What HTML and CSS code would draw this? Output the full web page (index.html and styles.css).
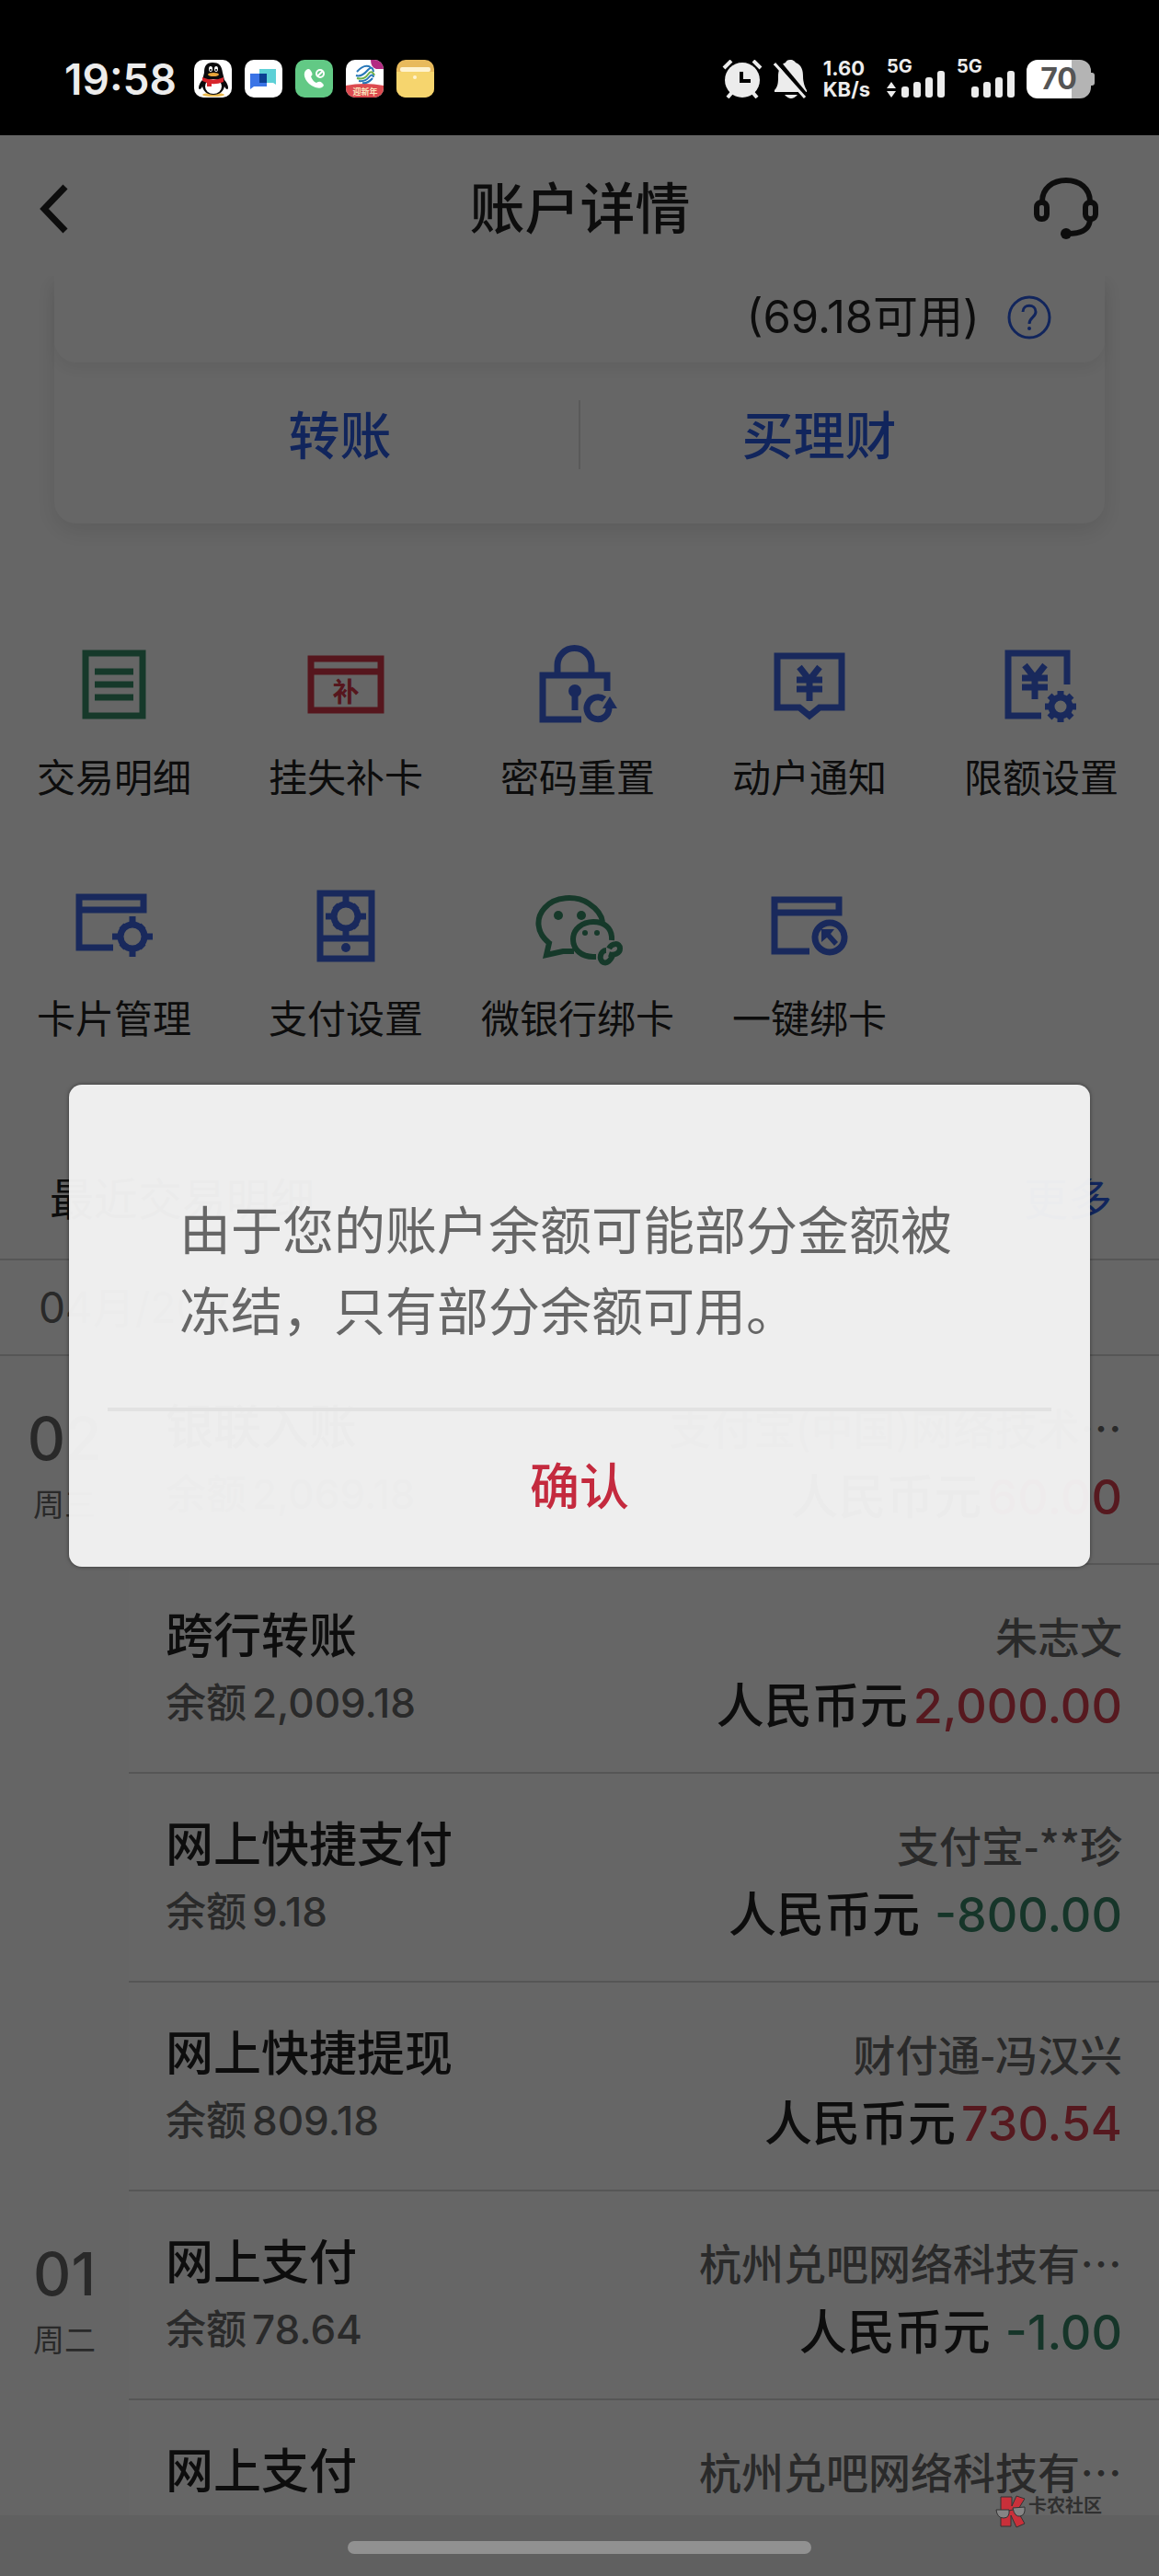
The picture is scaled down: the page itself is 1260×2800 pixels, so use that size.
FILE: index.html
```html
<!doctype html>
<html lang="zh-CN">
<head>
<meta charset="utf-8">
<meta name="viewport" content="width=device-width, initial-scale=1">
<title>账户详情</title>
<link rel="stylesheet" href="styles.css">
</head>
<body>

<div class="statusbar">
	<div class="status-left">
		<span class="time">19:58</span>
		<!-- qq -->
		<svg class="app" viewBox="0 0 41 41"><rect width="41" height="41" rx="10" fill="#fff"/><ellipse cx="21" cy="38" rx="12" ry="2" fill="#e9b84e"/><path d="M9 22C5 26 4 32 6 32c1 0 2-1 3-3 1 5 5 9 12 9s11-4 12-9c1 2 2 3 3 3 2 0 1-6-3-10l-2-8C30 6 27 3 20 3S11 7 11 14z" fill="#0a0a0c"/><ellipse cx="21" cy="29" rx="9" ry="8" fill="#fff"/><path d="M9 19q12 5 23 0v5q-8 3-13 2v3h-5v-4l-5-2z" fill="#d8252c"/><ellipse cx="18" cy="10" rx="2" ry="3" fill="#fff"/><ellipse cx="24" cy="10" rx="2" ry="3" fill="#fff"/><circle cx="18" cy="11" r="1"/><circle cx="24" cy="11" r="1"/><ellipse cx="21" cy="16" rx="6" ry="2" fill="#e9a63a"/></svg>
		<!-- messages -->
		<svg class="app" viewBox="0 0 41 41"><rect width="41" height="41" rx="10" fill="#fff"/><path d="M16 10h18v17l-3-2H16z" fill="#5dd0d6"/><path d="M6 15h18v14H10l-4 3z" fill="#3a74e6"/><path d="M16 15h8v10h-8z" fill="#0b3f94"/></svg>
		<!-- phone -->
		<svg class="app" viewBox="0 0 41 41"><rect width="41" height="41" rx="10" fill="#62c985"/><path d="M12 11c-4 3-2 10 2 14s11 7 15 5c3-2 2-3 0-5s-4-1-6 0c-3-1-5-4-6-7 2-1 2-3 0-6-1-2-3-3-5-1z" fill="#fff"/><circle cx="27" cy="15" r="4" fill="none" stroke="#fff" stroke-width="2"/><path d="M24 18l6-6" stroke="#fff" stroke-width="2"/></svg>
		<!-- mobile carrier -->
		<svg class="app" viewBox="0 0 41 41"><rect width="41" height="41" rx="10" fill="#fff"/><path d="M0 28q20-4 41 0v3a10 10 0 0 1-10 10H10A10 10 0 0 1 0 31z" fill="#dc4a50"/><path d="M27 0h4a10 10 0 0 1 10 10h-8q-6-2-6-10z" fill="#b32a82"/><g fill="none" stroke-width="2"><path d="M12 13q8-9 15-5M11 17q6 2 12-5t7 1" stroke="#2777b8"/><path d="M12 20q8 2 12-4t7 1" stroke="#6eb04b"/><path d="M14 23q7 1 11-4t5 0M18 25q6 1 11-5" stroke="#2777b8"/></g><text class="tiny" x="21" y="38" font-size="9" text-anchor="middle" fill="#fbe3bd">迎新年</text></svg>
		<!-- files -->
		<svg class="app" viewBox="0 0 41 41"><rect width="41" height="41" rx="10" fill="#e8ba5c"/><path d="M0 13h41v18a10 10 0 0 1-10 10H10A10 10 0 0 1 0 31z" fill="#f6d56e"/><rect x="4" y="8" width="33" height="5" rx="2" fill="#fff3cf"/><circle cx="20" cy="19" r="2" fill="#fff3cf"/></svg>
	</div>
	<div class="status-right">
		<svg width="44" height="42" viewBox="0 0 44 42"><circle cx="22" cy="22" r="19" fill="#ececec"/><path d="M2 9l8-8M42 9l-8-8M6 41l6-7M38 41l-6-7" stroke="#ececec" stroke-width="4"/><path d="M21 13v10h10" fill="none" stroke="#000" stroke-width="4"/></svg>
		<svg width="36" height="42" viewBox="0 0 36 42"><path d="M18 0c4 0 5 2 6 3 7 3 8 9 8 15s2 12 4 15v2H1v-2c4-4 4-9 4-15S7 5 13 3c1-2 2-3 5-3zM12 38h14q-7 8-14 0z" fill="#ececec"/><path d="M3 0l35 42" stroke="#000" stroke-width="5"/><path d="M1 4l33 37" stroke="#ececec" stroke-width="3"/></svg>
		<div class="speed"><span>1.60</span><span>KB/s</span></div>
		<div class="signal">
			<span class="net">5G</span>
			<svg width="64" height="30" viewBox="0 0 64 30"><path d="M0 13l5-7 5 7zM0 16h10l-5 7z" transform="translate(0 6)" fill="#ececec"/><g fill="#ececec"><rect x="16" y="17" width="8" height="12" rx="3"/><rect x="29" y="12" width="8" height="17" rx="3"/><rect x="42" y="7" width="8" height="22" rx="3"/><rect x="55" y="0" width="8" height="29" rx="3"/></g></svg>
		</div>
		<div class="signal">
			<span class="net">5G</span>
			<svg width="64" height="30" viewBox="0 0 64 30"><g fill="#ececec"><rect x="16" y="17" width="8" height="12" rx="3"/><rect x="29" y="12" width="8" height="17" rx="3"/><rect x="42" y="7" width="8" height="22" rx="3"/><rect x="55" y="0" width="8" height="29" rx="3"/></g></svg>
		</div>
		<div class="battery"><span>70</span></div>
	</div>
</div>

<div class="screen">
	<header class="topbar">
		<button class="icon-btn" aria-label="返回"><svg width="32" height="54" viewBox="0 0 32 54"><path d="M28 3L5 27l23 24" fill="none" stroke="#222" stroke-width="7"/></svg></button>
		<h1>账户详情</h1>
		<button class="icon-btn" aria-label="客服"><svg width="70" height="68" viewBox="0 0 70 68"><g fill="none" stroke="#222" stroke-width="6"><path d="M9 26C9 12 20 3 35 3s26 9 26 23"/><rect x="3" y="27" width="11" height="18" rx="5"/><rect x="56" y="27" width="11" height="18" rx="5"/><path d="M61 46c-1 11-9 15-24 15"/></g><circle cx="35" cy="61" r="6" fill="#222"/></svg></button>
	</header>

	<main class="content">
		<section class="card">
			<div class="available">
				<span>(69.18可用)</span>
				<button class="icon-btn" aria-label="说明"><svg width="48" height="48" viewBox="0 0 48 48"><circle cx="24" cy="24" r="22" fill="none" stroke="#2c5ce6" stroke-width="3"/><path d="M17 18c0-9 14-9 14 0 0 6-7 6-7 13" fill="none" stroke="#2c5ce6" stroke-width="3"/><circle cx="24" cy="36" r="2" fill="#2c5ce6"/></svg></button>
			</div>
			<div class="card-links">
				<a href="#">转账</a>
				<a href="#">买理财</a>
			</div>
		</section>

		<nav class="tools">
			<button class="tool"><svg class="green" viewBox="0 0 84 84"><path d="M11 8h62v68H11zM21 28h42M21 42h42M21 56h42"/></svg>交易明细</button>
			<button class="tool"><svg class="red" viewBox="0 0 84 84"><path d="M4 14h76v56H4zM4 28h76"/><text x="42" y="61" text-anchor="middle" font-size="29">补</text></svg>挂失补卡</button>
			<button class="tool"><svg viewBox="0 0 84 84"><path d="M74 49V32H4v48h42M20 30V21a18 18 0 0 1 37 0v9M39 50v20M71 58a12 12 0 1 0 5 10"/><circle class="solid" cx="39" cy="49" r="7"/><path class="solid" d="M69 68l8-13 8 13z"/></svg>密码重置</button>
			<button class="tool"><svg viewBox="0 0 84 84"><path d="M7 11h70v56H53L42 76 31 67H7zM31 23l11 14 11-14M28 37h28M28 47h28M42 36v24"/></svg>动户通知</button>
			<button class="tool"><svg viewBox="0 0 84 84"><path d="M42 76H6V8h64v34M24 21l11 14 11-14M21 35h28M21 45h28M35 34v24"/><circle cx="63" cy="66" r="10"/><path d="M63 49v6M63 77v6M46 66h6M74 66h6M51 54l4 4M71 74l4 4M75 54l-4 4M55 74l-4 4"/></svg>限额设置</button>
			<button class="tool"><svg viewBox="0 0 84 84"><path d="M41 66H4V11h70v14H4"/><circle cx="62" cy="54" r="13"/><path d="M62 32v8M62 68v8M40 54h8M76 54h8M50 42l3 3M71 63l3 3M74 42l-3 3M53 63l-3 3"/></svg>卡片管理</button>
			<button class="tool"><svg viewBox="0 0 84 84"><path d="M14 7h56v71H14zM14 56h56"/><circle cx="42" cy="32" r="13"/><path d="M42 10v8M42 46v8M20 32h8M56 32h8M30 20l3 3M51 41l3 3M54 20l-3 3M33 41l-3 3"/><circle class="solid" cx="42" cy="66" r="5"/></svg>支付设置</button>
			<button class="tool"><svg class="green" viewBox="0 0 84 84"><g stroke-width="6"><path d="M38 70H26L8 74l3-13C-4 49-3 33 6 23c11-13 34-14 48-5 9 6 14 12 15 20"/><path d="M79 58C80 44 70 38 59 38c-12 0-22 8-22 19s9 19 22 19h3"/><path d="M73 69c-6 0-9 10-3 13 5 2 8-3 10-7M76 73c6 2 12-1 12-6 0-7-9-6-12 0"/></g><circle class="solid" cx="21" cy="31" r="5"/><circle class="solid" cx="46" cy="31" r="5"/><circle class="solid" cx="50" cy="50" r="3"/><circle class="solid" cx="63" cy="50" r="3"/></svg>微银行绑卡</button>
			<button class="tool"><svg viewBox="0 0 84 84"><path d="M42 70H4V14h70v14H4"/><circle cx="64" cy="55" r="16"/><path class="solid" d="M55 46h14l-4 5 8 9-4 4-8-9-6 5z"/></svg>一键绑卡</button>
		</nav>

		<section class="history">
			<div class="history-head">
				<h2>最近交易明细</h2>
				<a href="#">更多</a>
			</div>
			<div class="month">04月/2025</div>

			<div class="day">
				<div class="date"><b>02</b><span>周三</span></div>
				<ul class="rows">
					<li class="row">
						<div><strong>银联入账</strong><em>余额<i>2,069.18</i></em></div>
						<div class="side"><span class="party">支付宝(中国)网络技术…</span><span class="amount">人民币元<i class="in">60.00</i></span></div>
					</li>
					<li class="row">
						<div><strong>跨行转账</strong><em>余额<i>2,009.18</i></em></div>
						<div class="side"><span class="party">朱志文</span><span class="amount">人民币元<i class="in">2,000.00</i></span></div>
					</li>
					<li class="row">
						<div><strong>网上快捷支付</strong><em>余额<i>9.18</i></em></div>
						<div class="side"><span class="party">支付宝-**珍</span><span class="amount">人民币元<i class="out">-800.00</i></span></div>
					</li>
					<li class="row">
						<div><strong>网上快捷提现</strong><em>余额<i>809.18</i></em></div>
						<div class="side"><span class="party">财付通-冯汉兴</span><span class="amount">人民币元<i class="in">730.54</i></span></div>
					</li>
				</ul>
			</div>

			<div class="day">
				<div class="date"><b>01</b><span>周二</span></div>
				<ul class="rows">
					<li class="row">
						<div><strong>网上支付</strong><em>余额<i>78.64</i></em></div>
						<div class="side"><span class="party">杭州兑吧网络科技有…</span><span class="amount">人民币元<i class="out">-1.00</i></span></div>
					</li>
					<li class="row">
						<div><strong>网上支付</strong></div>
						<div class="side"><span class="party">杭州兑吧网络科技有…</span></div>
					</li>
				</ul>
			</div>
		</section>
	</main>

	<div class="mask">
		<div class="dialog" role="alertdialog" aria-modal="true" aria-describedby="msg">
			<p id="msg">由于您的账户余额可能部分金额被冻结，只有部分余额可用。</p>
			<button>确认</button>
		</div>
	</div>
</div>

<footer class="navbar">
	<div class="handle"></div>
	<div class="watermark">
		<svg width="34" height="36" viewBox="0 0 34 36"><path d="M6 2h12v10l5-11 9 3-8 13 8 14-9 4-6-13v12H6z" fill="#c9303a" stroke="#333" stroke-width="1"/><path d="M1 16h14q1 9-6 9t-8-9zM19 14l13-1q1 9-5 10t-8-9zM15 17l4-1" fill="#858585" stroke="#333" stroke-width="1"/></svg>
		<span>卡农社区</span>
	</div>
</footer>

</body>
</html>
```

FILE: styles.css
```css
* {
	box-sizing: border-box;
}

body {
	margin: 0;
	height: 100vh;
	display: flex;
	flex-direction: column;
	overflow: hidden;
	background: #fff;
	color: #222;
	font-family: Inter, "Noto Sans CJK SC", sans-serif;
}

button {
	padding: 0;
	border: 0;
	background: none;
	color: inherit;
	font-family: inherit;
}

a {
	color: #2c5ce6;
	text-decoration: none;
}

h1, h2, p, ul {
	margin: 0;
	padding: 0;
	font-weight: 500;
}

svg {
	display: block;
}

/* status bar */
.statusbar {
	flex: none;
	display: flex;
	justify-content: space-between;
	align-items: center;
	height: 147px;
	padding: 24px 74px 0 70px;
	background: #000;
	color: #ececec;
}

.status-left,
.status-right {
	display: flex;
	align-items: center;
	gap: 14px;
}

.status-right {
	gap: 12px;
}

.time {
	margin-right: 5px;
	font-size: 46px;
	line-height: 48px;
	font-weight: 600;
}

.app {
	width: 41px;
	height: 41px;
}

.tiny {
	font-weight: 700;
}

.speed {
	display: flex;
	flex-direction: column;
	margin: 0 6px;
	font-size: 22px;
	line-height: 23px;
	font-weight: 700;
}

.signal {
	display: flex;
	flex-direction: column;
	height: 44px;
}

.net {
	font-size: 20px;
	line-height: 16px;
	font-weight: 700;
}

.signal svg {
	margin-top: -3px;
}

.battery {
	position: relative;
	width: 70px;
	height: 42px;
	border-radius: 12px;
	background: linear-gradient(90deg, #fff 70%, #b4b4b4 70%);
	color: #555;
	font-size: 32px;
	line-height: 42px;
	font-weight: 700;
	text-align: center;
}

.battery::after {
	content: "";
	position: absolute;
	right: -4px;
	top: 14px;
	width: 4px;
	height: 14px;
	border-radius: 0 3px 3px 0;
	background: #b4b4b4;
}

/* page */
.screen {
	flex: 1;
	min-height: 0;
	position: relative;
	display: flex;
	flex-direction: column;
	overflow: hidden;
}

.topbar {
	flex: none;
	display: flex;
	justify-content: space-between;
	align-items: center;
	height: 153px;
	padding: 6px 66px 0 43px;
}

.topbar h1 {
	padding-left: 62px;
	font-size: 60px;
	line-height: 80px;
}

.content {
	flex: 1;
	min-height: 0;
	overflow: hidden;
}

.card {
	margin: 0 59px;
	border-radius: 0 0 24px 24px;
	box-shadow: 0 8px 24px rgba(0, 0, 0, .1);
}

.available {
	display: flex;
	justify-content: flex-end;
	align-items: center;
	gap: 30px;
	height: 94px;
	padding: 0 58px 4px;
	border-radius: 0 0 24px 24px;
	box-shadow: 0 8px 16px rgba(0, 0, 0, .06);
	font-size: 49px;
	line-height: 64px;
}

.card-links {
	display: flex;
	padding: 41px 51px 59px;
}

.card-links a {
	flex: 1;
	padding-top: 4px;
	font-size: 56px;
	line-height: 71px;
	font-weight: 500;
	text-align: center;
}

.card-links a + a {
	border-left: 2px solid #e0e0e0;
}

.tools {
	display: grid;
	grid-template-columns: repeat(5, 1fr);
	padding-top: 133px;
}

.tool {
	display: flex;
	flex-direction: column;
	align-items: center;
	gap: 32px;
	height: 262px;
	padding-right: 4px;
	font-size: 42px;
	line-height: 56px;
	white-space: nowrap;
}

.tool svg {
	width: 84px;
	height: 84px;
	overflow: visible;
	fill: none;
	stroke: #4068e6;
	stroke-width: 7;
	color: #4068e6;
}

.tool .green {
	stroke: #388f69;
	color: #388f69;
}

.tool .red {
	stroke: #d8384a;
	color: #d8384a;
}

.tool .solid,
.tool text {
	fill: currentColor;
	stroke: none;
}

.tool text {
	font-weight: 700;
}

/* transactions */
.history-head {
	display: flex;
	justify-content: space-between;
	height: 144px;
	padding: 46px 51px 0 54px;
	border-bottom: 2px solid #d8d8d8;
	font-size: 48px;
	line-height: 64px;
}

.history-head h2 {
	font-size: 48px;
	font-weight: 400;
}

.month {
	padding: 0 42px;
	border-bottom: 2px solid #d8d8d8;
	font-size: 46px;
	line-height: 102px;
	color: #666;
}

.day {
	display: flex;
}

.date {
	flex: none;
	display: flex;
	flex-direction: column;
	align-items: center;
	width: 140px;
	padding-top: 50px;
	background: #fcfcfc;
	color: #666;
	font-size: 34px;
	line-height: 64px;
}

.date b {
	font-size: 64px;
	line-height: 80px;
	font-weight: 500;
}

.rows {
	flex: 1;
	list-style: none;
}

.row {
	display: flex;
	justify-content: space-between;
	height: 227px;
	padding: 42px 40px 0;
	border-bottom: 2px solid #d8d8d8;
}

.row strong,
.row em,
.party,
.amount {
	display: block;
	line-height: 72px;
	font-style: normal;
	white-space: nowrap;
}

.row strong {
	font-size: 52px;
	font-weight: 500;
}

.row em {
	font-size: 44px;
	color: #696969;
}

.row i {
	margin-left: 6px;
	font-style: normal;
}

.side {
	text-align: right;
}

.party {
	font-family: "Noto Sans CJK SC", sans-serif;
	font-size: 46px;
	line-height: 68px;
	color: #696969;
}

.amount {
	padding-top: 8px;
	font-size: 52px;
	font-weight: 500;
}

.row .in {
	color: #d8404f;
}

.row .out {
	margin-left: 16px;
	color: #388467;
}

/* dialog */
.mask {
	position: absolute;
	inset: 0;
	display: flex;
	justify-content: center;
	align-items: center;
	padding: 0 75px;
	background: rgba(0, 0, 0, .6);
}

.dialog {
	width: 100%;
	padding: 0 42px;
	border-radius: 14px;
	background: rgba(243, 243, 243, .97);
	box-shadow: 0 0 4px rgba(0, 0, 0, .5);
}

.dialog p {
	padding: 115px 78px 60px;
	border-bottom: 4px solid #e2e2e2;
	font-size: 56px;
	line-height: 88px;
	font-weight: 400;
	color: #666;
}

.dialog button {
	display: block;
	width: 100%;
	height: 169px;
	padding-bottom: 12px;
	font-size: 54px;
	font-weight: 500;
	color: #c42a3e;
}

/* gesture bar */
.navbar {
	flex: none;
	position: relative;
	height: 66px;
	padding-top: 28px;
	background: #606060;
}

.handle {
	width: 40%;
	height: 14px;
	margin: 0 auto;
	border-radius: 7px;
	background: #919191;
}

.watermark {
	position: absolute;
	right: 62px;
	top: -22px;
	display: flex;
	gap: 2px;
	color: #303030;
	font-size: 20px;
	line-height: 24px;
	font-weight: 700;
}
```
